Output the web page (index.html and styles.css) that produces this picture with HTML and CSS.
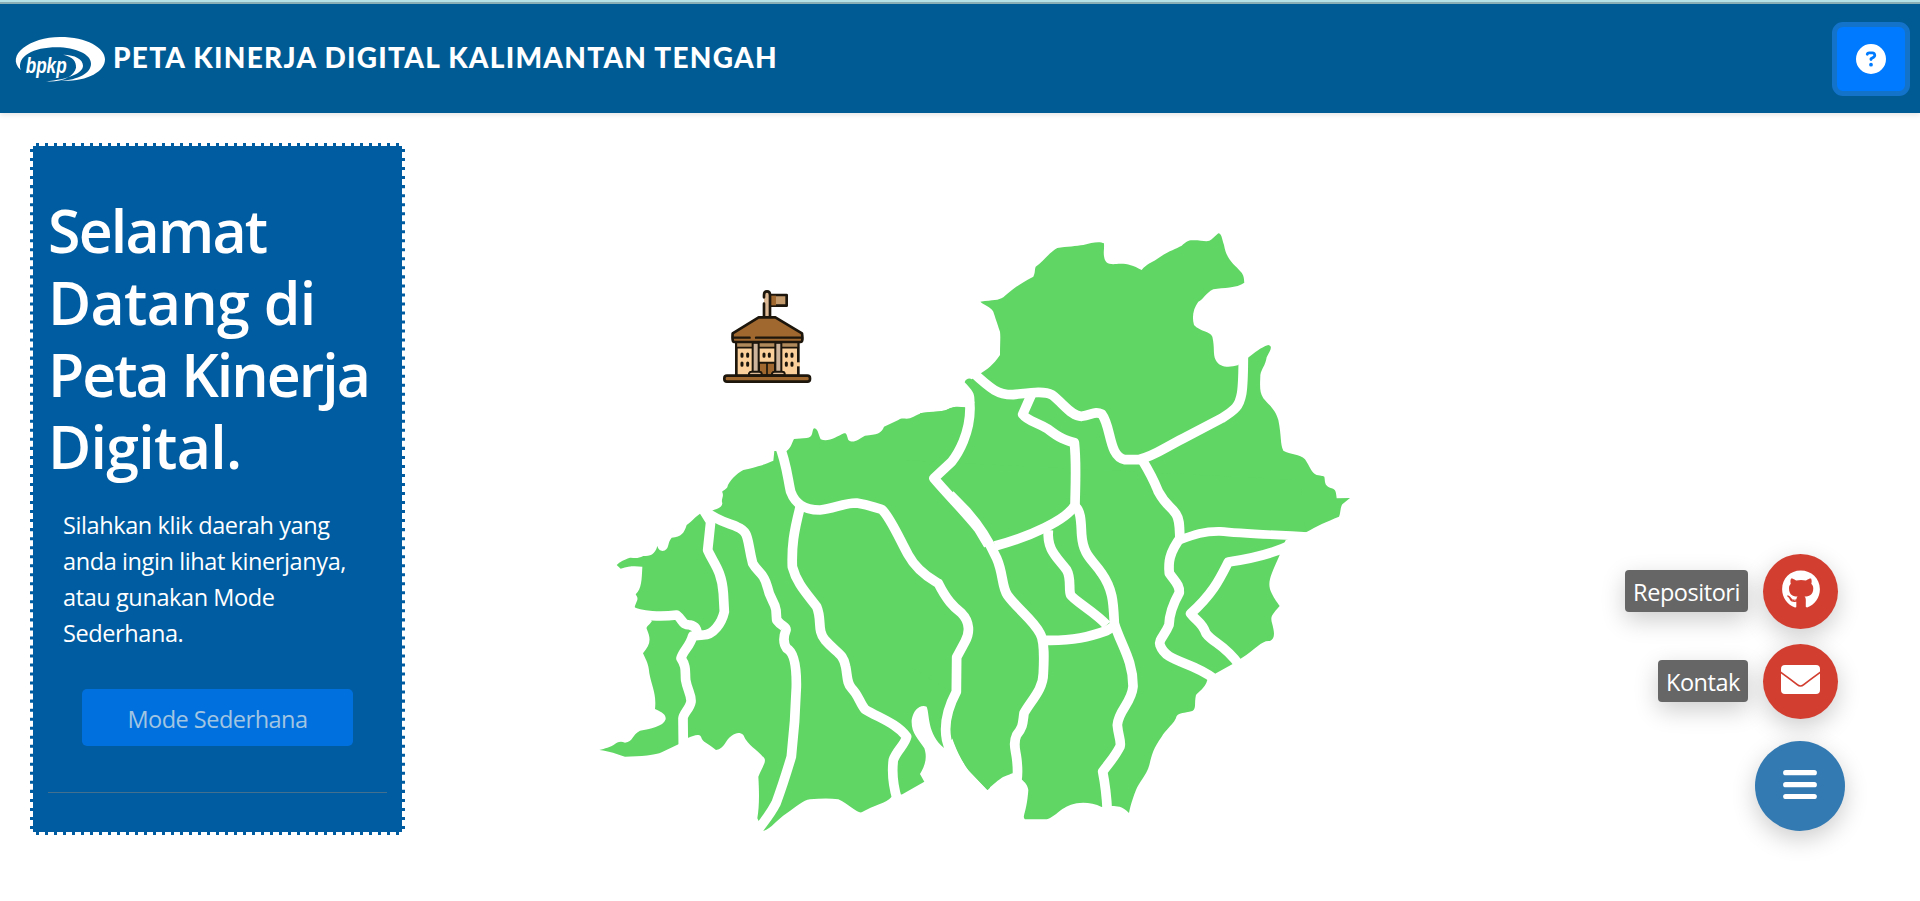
FILE: index.html
```html
<!DOCTYPE html>
<html lang="id">
<head>
<meta charset="utf-8">
<title>Peta Kinerja Digital Kalimantan Tengah</title>
<link rel="stylesheet" href="styles.css">
</head>
<body>
<header class="topbar">
  <div class="brand">
    <svg class="logo" viewBox="0 0 270 135">
      <path d="M17 99C-30 55 45 0 135 0C215 0 270 32 270 67C270 105 215 135 135 132C190 128 228 108 228 80C228 52 182 31 125 31C55 31 5 58 17 99Z" fill="#fff"/>
      <path d="M145 53C180 54 204 66 204 86C204 108 160 127 92 133C145 136 178 116 183 92C184 73 175 60 145 53Z" fill="#fff"/>
      <text class="logo-text" x="32" y="108" textLength="123" lengthAdjust="spacingAndGlyphs">bpkp</text>
    </svg>
    <h1 class="title">PETA KINERJA DIGITAL KALIMANTAN TENGAH</h1>
  </div>
  <button class="help" aria-label="Bantuan">
    <svg viewBox="0 0 512 512" width="30" height="30"><path fill="#fff" d="M256 512A256 256 0 1 0 256 0a256 256 0 1 0 0 512zM169.800 165.300c7.900-22.300 29.100-37.300 52.800-37.300h58.300c34.900 0 63.100 28.300 63.100 63.100c0 22.600-12.100 43.500-31.700 54.800L280 264.400c-.2 13-10.900 23.600-24 23.600c-13.300 0-24-10.700-24-24V250.500c0-8.600 4.600-16.500 12.100-20.800l44.300-25.400c4.700-2.700 7.600-7.700 7.600-13.100c0-8.400-6.800-15.100-15.100-15.100H222.600c-3.400 0-6.400 2.100-7.500 5.300l-.4 1.200c-4.400 12.500-18.200 19-30.600 14.600s-19-18.200-14.600-30.600l.3-1.300zM224 352a32 32 0 1 1 64 0 32 32 0 1 1-64 0z"/></svg>
  </button>
</header>
<main class="main">
  <aside class="welcome">
    <h2 class="greeting">
      <span class="line tight">Selamat</span>
      <span class="line loose">Datang di</span>
      <span class="line tighter">Peta Kinerja</span>
      <span class="line loose">Digital.</span>
    </h2>
    <p class="intro">Silahkan klik daerah yang<br>anda ingin lihat kinerjanya,<br>atau gunakan Mode<br>Sederhana.</p>
    <button class="mode" disabled>Mode Sederhana</button>
    <hr class="rule">
  </aside>
  <svg class="map" viewBox="590 220 780 620">
    <g class="land">
      <path transform="translate(590 400) scale(.333333)" d="M1200 10L1125 22C1110 20 1095 18 1085 24C1060 34 1050 34 1020 37C985 38 975 50 960 55C945 58 935 52 925 60L882 80C875 100 860 104 825 107C805 118 790 132 775 120C770 105 770 98 762 100C740 110 715 128 692 118C684 100 684 86 672 85C664 92 672 112 650 114L612 117C605 130 605 140 590 153L553 153L550 182C520 195 510 198 460 210C440 220 415 245 412 262C405 272 395 272 397 277C403 290 392 298 397 310C395 330 370 325 360 337L330 341C310 355 305 365 290 375C282 400 275 410 245 413C230 430 240 450 217 453C205 450 205 445 202 438C195 465 180 468 160 468C140 478 130 472 120 473C100 480 90 485 80 495L92 506C120 497 135 498 157 500C155 540 155 565 137 583C148 600 140 600 134 622L186 663C178 675 168 680 170 686C185 720 180 735 159 760C170 785 175 790 178 820C185 860 200 880 195 927C220 938 228 945 227 958C220 980 180 987 150 992C125 1005 130 1025 105 1028C90 1022 80 1028 75 1032C60 1043 45 1045 28 1050C60 1054 80 1062 105 1070C150 1070 200 1065 215 1057L267 1032L295 1013C310 1008 325 1000 333 1010C340 1030 350 1025 378 1050C405 1045 405 1020 425 1007C440 997 450 997 460 1005C475 1040 500 1045 523 1075C530 1085 515 1105 505 1130C508 1180 508 1220 502 1255L520 1293C545 1285 560 1260 590 1240C620 1220 640 1200 660 1198C690 1195 720 1194 745 1198C780 1215 800 1240 815 1237C850 1215 890 1210 905 1190L937 1183L1003 1145L990 1122C1010 1090 1010 1065 1003 1045C985 1015 963 1000 965 960C970 930 990 912 1010 920C1020 945 1010 1000 1063 1045L1088 1015C1100 1050 1120 1090 1135 1110L1193 1170L1200 1163Z"/>
      <path transform="translate(920 220) scale(.333333)" d="M0 580C20 575 60 575 75 572C90 565 95 558 135 563L163 550C165 520 160 515 134 487C137 475 150 473 155 478L185 458C210 445 230 420 240 405C240 370 242 350 240 335C230 305 225 290 220 275C210 258 195 258 181 245C220 240 235 242 250 232C270 215 290 195 340 170C347 155 343 150 347 140C370 125 390 95 412 84C440 80 470 78 490 75C515 67 540 63 552 70C553 90 550 95 552 108C555 130 565 134 590 132C620 130 635 135 665 150C680 132 695 128 710 118C740 95 765 88 785 77C800 65 805 60 820 61C850 61 865 68 875 58L895 40C905 40 905 55 912 75C920 120 940 130 965 158C973 170 972 180 973 188C950 205 910 202 880 208C855 220 850 240 835 245C820 265 815 290 822 315C840 335 870 333 877 350C885 385 878 400 887 420C900 445 930 442 953 436L986 412C1005 398 1020 383 1045 375C1060 380 1050 390 1040 412C1035 440 1025 445 1021 465C1020 500 1018 515 1030 535C1050 560 1065 565 1075 600C1085 650 1080 670 1090 692C1110 705 1140 700 1155 718C1170 740 1175 760 1190 765C1205 768 1210 768 1213 770C1216 785 1212 795 1230 803C1245 808 1248 808 1250 835L1290 834L1267 853C1260 865 1262 880 1257 890C1220 905 1190 918 1158 937L1097 960L1040 990L0 990Z"/>
      <path transform="translate(900 460) scale(.333333)" d="M0 0L1200 60L1217 217L1157 240L1138 287C1110 350 1100 370 1115 400C1125 420 1130 425 1139 438C1115 465 1112 470 1115 485C1125 520 1125 535 1110 543C1085 540 1070 565 1024 595L998 612L948 640L922 660C915 685 895 695 888 705C882 730 890 745 877 753C850 760 840 757 830 768C825 790 795 810 785 830C760 865 755 885 748 915C740 945 715 970 708 990C700 1010 693 1030 687 1059C665 1035 650 1040 637 1038L605 1041C580 1028 550 1026 530 1030C480 1040 470 1070 440 1078L375 1078C365 1070 380 1060 385 990C382 970 370 965 362 955L338 940C310 950 305 950 262 990L210 935C180 900 150 830 150 800L160 700L0 600Z"/>
    </g>
    <g class="borders">
      <g transform="translate(590 400) scale(.333333)">
        <path d="M566 130C590 190 592 230 602 275C615 310 640 330 690 330C730 328 760 308 800 309C840 315 850 322 875 328C900 350 930 420 955 465C985 520 1030 540 1045 550C1070 600 1090 620 1115 640C1140 665 1140 700 1125 725L1100 772L1099 875C1075 920 1060 970 1070 1020L1080 1055"/>
        <path d="M632 315C610 400 605 440 607 500C620 550 650 580 680 620C697 660 680 690 705 720C740 760 760 760 767 800C773 830 770 850 785 865C805 885 810 910 825 928C870 955 920 970 950 1010C945 1035 920 1050 910 1080C905 1120 910 1160 922 1200"/>
        <path d="M335 325C380 365 420 370 440 380C480 395 470 420 488 490C505 520 520 515 532 560C540 600 555 605 558 630L560 660C575 680 590 680 588 690C578 715 580 730 590 745C610 755 620 790 619 860C617 930 612 1000 604 1070C595 1100 580 1150 558 1210C540 1245 525 1260 504 1290"/>
        <path d="M340 330L362 365L353 450C370 490 395 510 400 580L403 635C395 670 370 705 340 705L308 708C300 740 280 750 273 775C290 800 285 815 287 840C292 870 305 885 303 905C300 925 280 940 279 955L280 1045"/>
        <path d="M120 632C150 650 220 650 260 645C280 660 275 675 300 675C320 680 320 690 322 700"/>
      </g>
      <g transform="translate(920 220) scale(.333333)">
        <path d="M155 454C215 510 235 525 280 524C320 520 370 510 395 524C430 550 455 590 485 589C515 585 525 572 545 582C575 620 565 710 615 719L655 719C700 710 730 685 790 655L905 595C945 570 958 560 965 520C970 490 970 450 970 400"/>
        <path d="M335 522L308 583C325 605 350 605 385 628C420 655 435 660 463 668C470 730 466 800 465 855C440 900 330 950 225 978"/>
        <path d="M668 722C700 775 705 790 715 815C740 860 750 855 768 882C780 900 778 920 780 962"/>
        <path d="M774 962C820 945 850 933 900 934C960 940 1040 944 1190 951" stroke-width="26"/>
        <path d="M149 545L150 565C150 640 115 700 95 725L42 775C80 820 130 870 175 925L205 975"/>
      </g>
      <g transform="translate(900 460) scale(.333333)">
        <path d="M150 104L200 155C240 200 270 250 290 295C310 340 305 380 322 405C350 445 400 480 420 520C435 545 432 600 430 640C430 690 390 725 372 760C368 790 370 800 350 825C338 850 347 870 350 895C353 920 355 940 350 965"/>
        <path d="M525 140C545 150 543 200 545 225C550 290 580 300 605 340C640 390 640 430 643 490C660 550 700 600 699 680C695 730 655 750 652 795C655 830 665 845 660 860C645 890 630 905 608 935C615 970 620 1010 622 1055"/>
        <path d="M445 210C440 270 470 290 500 330C515 355 505 390 512 405C520 420 590 460 620 495"/>
        <path d="M435 541C520 543 570 530 620 512L640 500"/>
        <path d="M845 228C805 280 805 310 808 340C825 365 840 375 838 398C820 430 808 460 807 495C795 525 775 540 780 555C800 610 870 600 945 658"/>
        <path d="M1175 254C1110 285 1050 297 985 306C960 355 940 400 872 461C890 485 905 485 918 520C940 550 970 550 1018 615"/>
      </g>
    </g>
    <g class="office" transform="translate(700 270) scale(.333333)">
      <path d="M205 75h55v32h-55z" fill="#c39a6b"/>
      <path d="M211 77h17v29h-17z" fill="#a0682f" stroke="none"/>
      <path d="M192 78Q192 64 201 64Q210 64 210 78V140H192Z" fill="#ddb995" stroke="none"/>
      <path d="M192 82V75Q192 64 201 64Q210 64 210 75V140M192 101V140" fill="none"/>
      <path d="M109 215h186v103H109z" fill="#fbd09b"/>
      <path d="M112 219h180v12H112z" fill="#b08a5b" stroke="none"/>
      <path d="M109 233h186" stroke-width="5"/>
      <path d="M177 278h48v38h-48z" fill="#a0682f" stroke-width="6"/>
      <path d="M201 280v35" stroke-width="5"/>
      <path d="M158 218h18v88h-18zM226 218h18v88h-18z" fill="#cdb49b" stroke-width="6"/>
      <path d="M147 316v-6q2-5 8-5h22q7 0 8 5v6zM216 316v-6q2-5 8-5h22q7 0 8 5v6z" fill="#ddb995" stroke-width="6"/>
      <path d="M176 142h50l80 48q4 26-4 26H102q-6 0-4-26z" fill="#a0682f"/>
      <path d="M99 203h50M168 203h138" stroke-width="7"/>
      <path d="M126 252v7M143 252v7M126 279v7M143 279v7M192 252v7M208 252v7M259 252v7M276 252v7M259 279v7M276 279v7" stroke-width="9"/>
      <path d="M290 277h10v12h-10z" fill="#fbd09b" stroke="none"/>
      <rect x="73" y="317" width="257" height="18" rx="8" fill="#a0682f"/>
    </g>
  </svg>
</main>
<nav class="fab">
  <div class="fab-row">
    <span class="fab-label">Repositori</span>
    <a class="fab-item"><svg viewBox="0 0 496 512" width="38" height="39"><path fill="#fff" d="M165.900 397.400c0 2-2.300 3.600-5.200 3.600-3.300.3-5.600-1.300-5.600-3.600 0-2 2.300-3.600 5.200-3.600 3-.3 5.600 1.300 5.600 3.600zm-31.100-4.500c-.7 2 1.300 4.300 4.300 4.900 2.600 1 5.600 0 6.200-2s-1.300-4.300-4.300-5.200c-2.600-.7-5.500.3-6.200 2.300zm44.200-1.700c-2.900.7-4.900 2.600-4.600 4.900.3 2 2.900 3.300 5.900 2.600 2.900-.7 4.900-2.600 4.600-4.600-.3-1.900-3-3.200-5.900-2.900zM244.800 8C106.100 8 0 113.300 0 252c0 110.900 69.800 205.800 169.500 239.200 12.800 2.300 17.300-5.600 17.300-12.100 0-6.200-.3-40.400-.3-61.400 0 0-70 15-84.700-29.800 0 0-11.400-29.100-27.800-36.600 0 0-22.900-15.700 1.600-15.400 0 0 24.900 2 38.600 25.800 21.900 38.600 58.600 27.500 72.900 20.900 2.300-16 8.800-27.100 16-33.700-55.900-6.200-112.300-14.300-112.300-110.500 0-27.500 7.600-41.300 23.600-58.900-2.600-6.500-11.100-33.300 2.600-67.900 20.900-6.500 69 27 69 27 20-5.600 41.500-8.500 62.800-8.500s42.800 2.900 62.800 8.500c0 0 48.100-33.600 69-27 13.700 34.700 5.200 61.400 2.600 67.900 16 17.700 25.800 31.500 25.800 58.900 0 96.500-58.900 104.200-114.800 110.500 9.200 7.900 17 22.900 17 46.400 0 33.700-.3 75.400-.3 83.600 0 6.500 4.600 14.400 17.300 12.100C428.200 457.800 496 362.900 496 252 496 113.300 383.500 8 244.800 8z"/></svg></a>
  </div>
  <div class="fab-row">
    <span class="fab-label">Kontak</span>
    <a class="fab-item"><svg viewBox="0 0 39 29" width="39" height="29"><path fill="#fff" d="M4 0H35Q39 0 39 4V6.500Q30 13 22.500 18.700Q19.500 21.600 16.500 18.700Q9 13 0 6.500V4Q0 0 4 0ZM0 8.500Q9 15 15.700 20.300Q19.500 23.300 23.300 20.300Q30 15 39 8.500V25Q39 29 35 29H4Q0 29 0 25Z"/></svg></a>
  </div>
  <a class="fab-main"><svg viewBox="0 0 34 29" width="34" height="29"><path d="M2.700 2.700H31.300M2.700 14.700H31.300M2.700 26.500H31.300" stroke="#fff" stroke-width="5.200" stroke-linecap="round"/></svg></a>
</nav>
</body>
</html>
```
FILE: styles.css
```css
* { box-sizing: border-box; }
body {
  margin: 0;
  height: 901px;
  overflow: hidden;
  background: #fff;
  font-family: "Open Sans", "Noto Sans", sans-serif;
  font-size: 23.5px;
  line-height: 36px;
}
.topbar {
  height: 113px;
  display: flex;
  align-items: center;
  justify-content: space-between;
  padding: 1px 10px 0 15px;
  background: linear-gradient(#b5e2e6 0 2px, #8aafb5 2px 4px, #005b94 4px);
  box-shadow: 0 2px 5px rgba(0, 0, 0, .1);
}
.brand { display: flex; align-items: center; gap: 8px; }
.logo { width: 90px; height: 45px; margin-top: 5px; overflow: visible; }
.logo-text {
  fill: #fff;
  font: italic bold 64px "Liberation Sans", sans-serif;
}
.title {
  margin: 0;
  color: #fff;
  font: 900 28px/36px Lato, sans-serif;
  letter-spacing: 1.27px;
  white-space: nowrap;
}
.help {
  width: 78px;
  height: 74px;
  margin-top: 4px;
  display: flex;
  align-items: center;
  justify-content: center;
  border: 5px solid #1373cb;
  border-radius: 11px;
  background: #007bff;
  padding: 0;
}
.main { display: flex; align-items: flex-start; padding: 30px 0 0 30px; }
.welcome {
  width: 375px;
  height: 692px;
  padding: 48px 15px 0;
  border: 3px dashed #fff;
  background: #005ca1;
  color: #fff;
}
.greeting {
  margin: 0;
  font-size: 59px;
  line-height: 72px;
  font-weight: 600;
  white-space: nowrap;
}
.line { display: block; }
.tight { letter-spacing: -1.8px; }
.tighter { letter-spacing: -2px; }
.loose { letter-spacing: -.7px; }
.intro { margin: 25px 0 0 15px; letter-spacing: -.4px; white-space: nowrap; }
.mode {
  display: block;
  width: 271px;
  height: 57px;
  margin: 38px 0 0 34px;
  padding: 3px 0 0;
  border: 0;
  border-radius: 5px;
  background: #0070de;
  color: #a2c5e2;
  font: inherit;
  letter-spacing: -.5px;
}
.rule { margin: 46px 0 0; border: 0; border-top: 1px solid #44708f; }
.map { width: 780px; height: 620px; margin: 77px 0 0 185px; }
.land { fill: #60d665; }
.borders { fill: none; stroke: #fff; stroke-width: 29; stroke-linejoin: round; }
.office { stroke: #1c160c; stroke-width: 8; stroke-linecap: round; stroke-linejoin: round; }
.fab {
  position: absolute;
  right: 75px;
  top: 554px;
  display: flex;
  flex-direction: column;
  align-items: flex-end;
  gap: 15px;
}
.fab-row { display: flex; align-items: center; gap: 15px; padding-right: 7px; }
.fab-label {
  height: 42px;
  margin-bottom: 2px;
  padding: 4px 8px 0;
  border-radius: 4px;
  background: #666;
  color: #fff;
  letter-spacing: -.45px;
  box-shadow: 0 8px 24px rgba(0, 0, 0, .2);
}
.fab-item, .fab-main {
  display: flex;
  align-items: center;
  justify-content: center;
  border-radius: 50%;
  box-shadow: 0 8px 24px rgba(0, 0, 0, .2);
}
.fab-item { width: 75px; height: 75px; background: #d23f31; padding-bottom: 4px; }
.fab-main { width: 90px; height: 90px; margin-top: 7px; background: #337ab2; padding-bottom: 3px; }
```
